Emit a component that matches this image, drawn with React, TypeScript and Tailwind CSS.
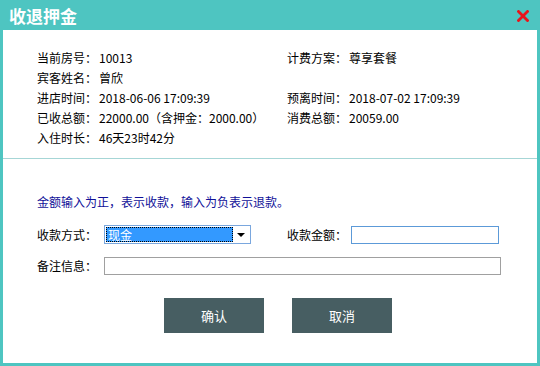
import React from "react"

const font = { fontFamily: '"Noto Sans CJK SC", "Liberation Sans", sans-serif' }

function Field({ label, value }: { label: string; value?: string }) {
  return (
    <div className="flex items-center h-[20px] text-[12px] text-black whitespace-nowrap">
      <span>{label}</span>
      {value && <span className="ml-[2px]">{value}</span>}
    </div>
  )
}

export default function App() {
  return (
    <div className="w-[540px] h-[366px] bg-[#4ec5c1] flex flex-col" style={font}>
      {/* Title bar */}
      <div className="h-[30px] flex items-center justify-between pl-[9px] pr-[11px]">
        <span className="text-white text-[17px] font-bold leading-none tracking-[0px]">收退押金</span>
        <svg width="12" height="12" viewBox="0 0 12 12" className="mt-[1px]">
          <path d="M1.5 1.5 L10.5 10.5 M10.5 1.5 L1.5 10.5" stroke="#e8151b" strokeWidth="2.8" strokeLinecap="square" />
        </svg>
      </div>

      <div className="flex-1 mx-[3px] mb-[3px] bg-white flex flex-col">
        {/* Info section */}
        <div className="h-[128px] pt-[18px] pl-[34px] grid grid-cols-[250px_1fr] content-start">
          <Field label="当前房号：" value="10013" />
          <Field label="计费方案：" value="尊享套餐" />
          <Field label="宾客姓名：" value="曾欣" />
          <div />
          <Field label="进店时间：" value="2018-06-06 17:09:39" />
          <Field label="预离时间：" value="2018-07-02 17:09:39" />
          <Field label="已收总额：" value="22000.00（含押金：2000.00）" />
          <Field label="消费总额：" value="20059.00" />
          <Field label="入住时长：" value="46天23时42分" />
        </div>

        <div className="h-px bg-[#a6d6d6]" />

        {/* Form section */}
        <div className="pl-[34px] pt-[33px] flex flex-col">
          <div className="h-[20px] flex items-center text-[12px] text-[#101098]">
            金额输入为正，表示收款，输入为负表示退款。
          </div>

          <div className="mt-[13px] flex items-center h-[19px]">
            <span className="w-[67px] text-[12px] text-black">收款方式：</span>
            <div className="w-[147px] h-[19px] border border-[#7aa7de] bg-white flex items-center p-[1px]">
              <div className="flex-1 h-full bg-[#3399ff] border border-dotted border-black flex items-center text-white text-[12px] pl-[1px] leading-none">
                现金
              </div>
              <svg width="16" height="15" viewBox="0 0 16 15" className="shrink-0">
                <path d="M4 6 L12 6 L8 10 Z" fill="#000" />
              </svg>
            </div>
            <span className="ml-[36px] w-[64px] text-[12px] text-black">收款金额：</span>
            <div className="w-[148px] h-[18px] border border-[#5c9ad8] bg-white" />
          </div>

          <div className="mt-[13px] flex items-center h-[18px]">
            <span className="w-[67px] text-[12px] text-black">备注信息：</span>
            <div className="w-[397px] h-[18px] border border-[#a0a0a0] bg-white" />
          </div>

          <div className="mt-[23px] flex gap-[28px] pl-[127px]">
            <button className="w-[100px] h-[35px] bg-[#475e62] text-white text-[13px]">确认</button>
            <button className="w-[100px] h-[35px] bg-[#475e62] text-white text-[13px]">取消</button>
          </div>
        </div>
      </div>
    </div>
  )
}
